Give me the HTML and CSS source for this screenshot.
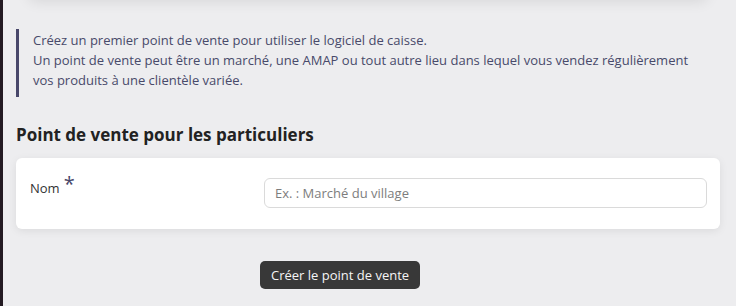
FILE: index.html
```html
<!DOCTYPE html>
<html lang="fr">
<head>
    <meta charset="UTF-8">
    <meta name="viewport" content="width=device-width, initial-scale=1.0">
    <title>Point de vente</title>
    <link rel="stylesheet" href="styles.css">
</head>
<body>
    <div class="layout">
        <div class="sidebar-edge"></div>
        <main class="content">
            <div class="top-card"></div>

            <blockquote class="intro">
                Créez un premier point de vente pour utiliser le logiciel de caisse.<br>
                Un point de vente peut être un marché, une AMAP ou tout autre lieu dans lequel vous vendez régulièrement vos produits à une clientèle variée.
            </blockquote>

            <h2 class="section-title">Point de vente pour les particuliers</h2>

            <form class="form-card">
                <div class="form-row">
                    <label for="name">Nom<span class="required">*</span></label>
                    <input type="text" id="name" placeholder="Ex. : Marché du village">
                </div>
            </form>

            <div class="actions">
                <button type="submit">Créer le point de vente</button>
            </div>
        </main>
    </div>
</body>
</html>
```

FILE: styles.css
```css
body {
    margin: 0;
    font-family: "Open Sans", Arial, sans-serif;
    background: #ededef;
    color: #333;
    overflow: hidden;
}

.layout {
    display: flex;
    min-height: 306px;
}

.sidebar-edge {
    width: 3px;
    background: #231a22;
    flex-shrink: 0;
}

.content {
    flex: 1;
    padding: 0 16px 0 13px;
}

.top-card {
    height: 20px;
    margin: -22px 12px 0;
    background: #ededef;
    box-shadow: 0 4px 14px rgba(0,0,0,0.09);
    border-radius: 8px;
}

.intro {
    margin: 31px 0 0;
    padding: 1px 20px 7px 14px;
    border-left: 3px solid #48476a;
    font-size: 13px;
    line-height: 20px;
    color: #484a6a;
}

.section-title {
    margin: 26px 0 12px;
    font-size: 17px;
    font-weight: bold;
    color: #222;
}

.form-card {
    background: white;
    border-radius: 6px;
    padding: 20px 13px 21px 14px;
    box-shadow: 0 2px 8px rgba(0,0,0,0.08);
}

.form-row {
    display: grid;
    grid-template-columns: 234px 1fr;
    align-items: start;
}

label {
    font-size: 13px;
    color: #333;
    padding-top: 1px;
}

.required {
    margin-left: 4px;
    font-size: 20px;
    line-height: 10px;
    color: #48476a;
    position: relative;
    top: -2px;
}

input[type="text"] {
    height: 30px;
    padding: 0 10px;
    border: 1px solid #dadada;
    border-radius: 6px;
    font-family: "Open Sans", Arial, sans-serif;
    font-size: 13px;
    box-sizing: border-box;
    color: #333;
}

input[type="text"]::placeholder {
    color: #7d7d7d;
}

.actions {
    padding: 32px 0 0 244px;
}

button {
    height: 28px;
    padding: 0 11px;
    background: #383838;
    color: #f5f5f5;
    border: none;
    border-radius: 5px;
    font-family: "Open Sans", Arial, sans-serif;
    font-size: 13px;
    cursor: pointer;
}
```
